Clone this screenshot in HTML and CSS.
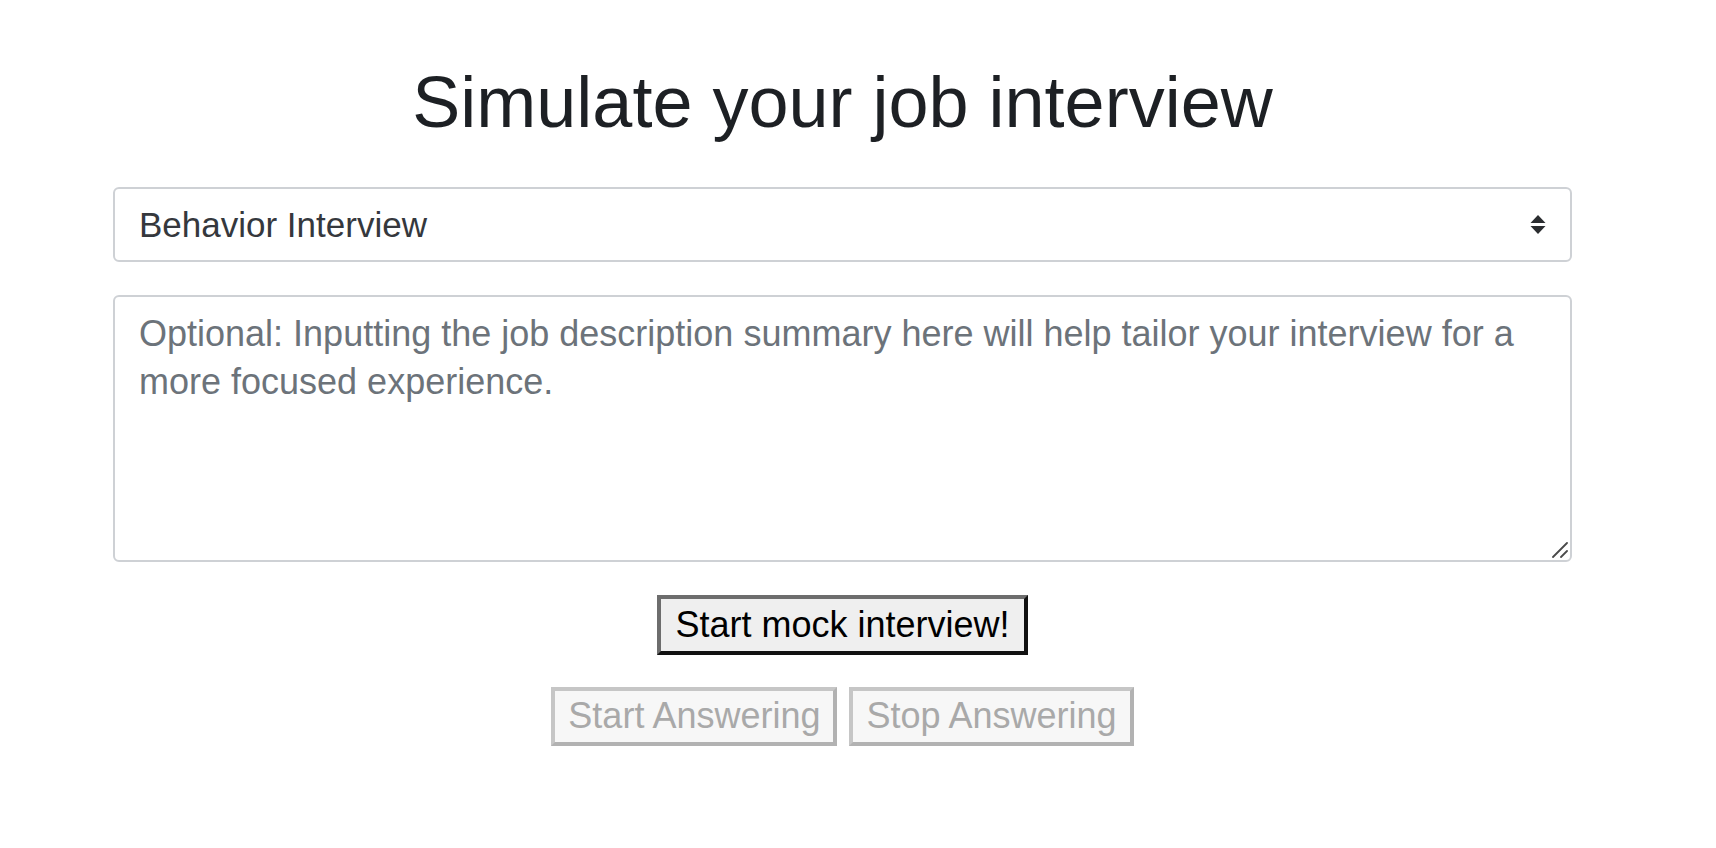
FILE: index.html
```html
<!DOCTYPE html>
<html lang="en">
<head>
<meta charset="utf-8">
<title>Simulate your job interview</title>
<link rel="stylesheet" href="styles.css">
</head>
<body>
<main class="page">
  <h1 class="title">Simulate your job interview</h1>
  <div class="select-wrap">
    <select class="type-select">
      <option>Behavior Interview</option>
      <option>Technical Interview</option>
    </select>
    <svg class="select-arrow" width="16" height="20" viewBox="0 0 16 20" aria-hidden="true">
      <path d="M8 0 L15.5 8 L0.5 8 Z" fill="#2b2d30"/>
      <path d="M0.5 11 L15.5 11 L8 19 Z" fill="#2b2d30"/>
    </svg>
  </div>
  <div class="jd-wrap">
    <textarea class="jd" placeholder="Optional: Inputting the job description summary here will help tailor your interview for a more focused experience."></textarea>
    <svg class="grip" width="16" height="16" viewBox="0 0 16 16" aria-hidden="true">
      <path d="M1 15 L15 1" stroke="#4a4a4a" stroke-width="1.8" stroke-linecap="round"/>
      <path d="M9 15 L15 9" stroke="#4a4a4a" stroke-width="1.8" stroke-linecap="round"/>
    </svg>
  </div>
  <div class="row row-main">
    <button class="btn-main" type="button">Start mock interview!</button>
  </div>
  <div class="row row-answer">
    <button class="btn-off" type="button" disabled>Start Answering</button>
    <button class="btn-off" type="button" disabled>Stop Answering</button>
  </div>
</main>
</body>
</html>
```

FILE: styles.css
```css
html, body {
  margin: 0;
  padding: 0;
  background: #ffffff;
}

.page {
  padding: 0 144px 0 113px;
  font-family: "Liberation Sans", Arial, sans-serif;
}

.title {
  margin: 59px 0 42px;
  font-size: 72px;
  line-height: 86px;
  font-weight: 400;
  color: #1d2024;
  text-align: center;
}

.select-wrap {
  position: relative;
}

.type-select {
  display: block;
  width: 100%;
  height: 75px;
  box-sizing: border-box;
  margin: 0;
  padding: 0 60px 0 24px;
  border: 2px solid #ced1d5;
  border-radius: 6px;
  background: #ffffff;
  appearance: none;
  -webkit-appearance: none;
  font-family: "Liberation Sans", Arial, sans-serif;
  font-size: 35px;
  color: #35383d;
  outline: none;
}

.select-arrow {
  position: absolute;
  right: 26px;
  top: 28px;
  pointer-events: none;
}

.jd-wrap {
  position: relative;
  margin-top: 33px;
}

.jd {
  display: block;
  width: 100%;
  height: 267px;
  box-sizing: border-box;
  margin: 0;
  padding: 13px 24px;
  border: 2px solid #ced1d5;
  border-radius: 6px;
  background: #ffffff;
  font-family: "Liberation Sans", Arial, sans-serif;
  font-size: 36px;
  line-height: 48px;
  color: #212529;
  outline: none;
  resize: none;
}

.jd::placeholder {
  color: #6c737a;
  opacity: 1;
}

.grip {
  position: absolute;
  right: 4px;
  bottom: 4px;
  pointer-events: none;
}

.row {
  display: flex;
  justify-content: center;
  gap: 12px;
}

.row-main {
  margin-top: 33px;
}

.row-answer {
  margin-top: 32px;
}

.btn-main,
.btn-off {
  margin: 0;
  font-family: "Liberation Sans", Arial, sans-serif;
  font-size: 36px;
  line-height: 42px;
  border-width: 4px;
  border-style: solid;
  border-radius: 0;
}

.btn-main {
  padding: 5px 14px;
  background: #efefef;
  color: #000000;
  border-color: #6d6d6d #111111 #111111 #6d6d6d;
}

.btn-off {
  padding: 4px 13px 5px;
  background: #f7f7f7;
  color: #a9a9a9;
  border-color: #c6c6c6 #b2b2b2 #b2b2b2 #c6c6c6;
}
```
